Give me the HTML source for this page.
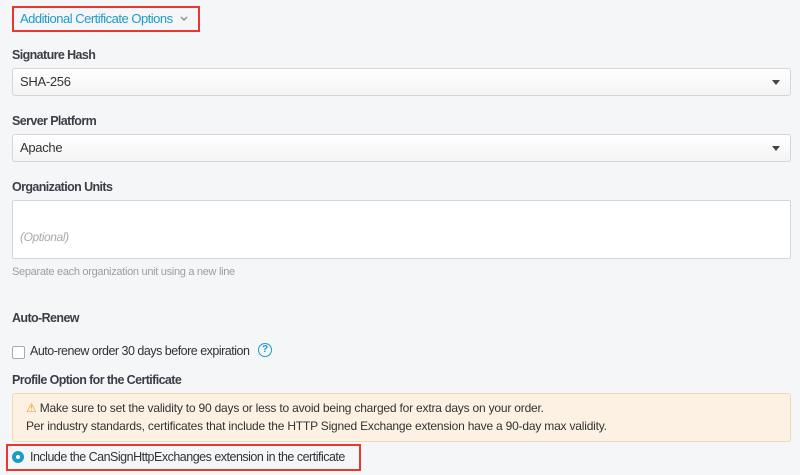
<!DOCTYPE html>
<html><head><style>
body{margin:0;width:800px;height:475px;background:#f5f6f8;font-family:"Liberation Sans",sans-serif;color:#333;position:relative;overflow:hidden}
.a{position:absolute;white-space:nowrap}
.lbl{font-size:12.5px;font-weight:bold;color:#3a3f45;left:12px;letter-spacing:-0.6px}
.sel{left:12px;width:777px;height:26px;border:1px solid #d3d6da;border-radius:3px;background:linear-gradient(#fff,#f4f4f5);font-size:13px;color:#333;line-height:26px;text-indent:7px;letter-spacing:-0.3px}
.sel:after{content:"";position:absolute;right:10px;top:11px;border-left:4px solid transparent;border-right:4px solid transparent;border-top:5px solid #444}
</style></head><body>
<div class="a" style="left:12px;top:6px;width:184px;height:22px;border:2px solid #e8372e;font-size:13px;color:#1d9bc7;line-height:22px;text-indent:6px;letter-spacing:-0.5px">Additional Certificate Options <svg width="8" height="6" style="margin-left:4px;vertical-align:1px"><path d="M1 1l3 3 3-3" stroke="#888" stroke-width="1.3" fill="none"/></svg></div>
<div class="a lbl" style="top:48px">Signature Hash</div>
<div class="a sel" style="top:68px">SHA-256</div>
<div class="a lbl" style="top:114px">Server Platform</div>
<div class="a sel" style="top:134px">Apache</div>
<div class="a lbl" style="top:180px">Organization Units</div>
<div class="a" style="left:12px;top:200px;width:777px;height:57px;border:1px solid #d3d6da;background:#fff;border-radius:2px"><span class="a" style="left:7px;top:29px;font-size:12px;font-style:italic;color:#aaa;letter-spacing:-0.4px">(Optional)</span></div>
<div class="a" style="left:12px;top:266px;font-size:11px;color:#9a9ea3;letter-spacing:-0.3px">Separate each organization unit using a new line</div>
<div class="a lbl" style="top:311px">Auto-Renew</div>
<div class="a" style="left:12px;top:346px;width:11px;height:11px;border:1px solid #aaa;border-radius:2px;background:#fff"></div>
<div class="a" style="left:30px;top:344px;font-size:12.5px;color:#333;letter-spacing:-0.5px">Auto-renew order 30 days before expiration</div>
<div class="a" style="left:258px;top:343px;width:12px;height:12px;border:1.5px solid #1d9bc7;border-radius:50%;color:#1d9bc7;font-size:10px;font-weight:bold;text-align:center;line-height:12px">?</div>
<div class="a lbl" style="top:373px">Profile Option for the Certificate</div>
<div class="a" style="left:12px;top:393px;width:777px;height:47px;background:#fcf1e2;border:1px solid #efd9b5;border-radius:3px;font-size:12px;color:#333;line-height:18px;letter-spacing:-0.2px">
<div style="padding:5px 0 0 13px"><span style="color:#e49b1c">&#9888;</span> Make sure to set the validity to 90 days or less to avoid being charged for extra days on your order.<br>Per industry standards, certificates that include the HTTP Signed Exchange extension have a 90-day max validity.</div></div>
<div class="a" style="left:6px;top:444px;width:351px;height:23px;border:2px solid #e8372e"></div>
<div class="a" style="left:12px;top:451px;width:12px;height:12px;border-radius:50%;background:#1d9bc7"><div class="a" style="left:4px;top:4px;width:4px;height:4px;border-radius:50%;background:#fff"></div></div>
<div class="a" style="left:30px;top:450px;font-size:12.5px;color:#333;letter-spacing:-0.5px">Include the CanSignHttpExchanges extension in the certificate</div>
</body></html>
